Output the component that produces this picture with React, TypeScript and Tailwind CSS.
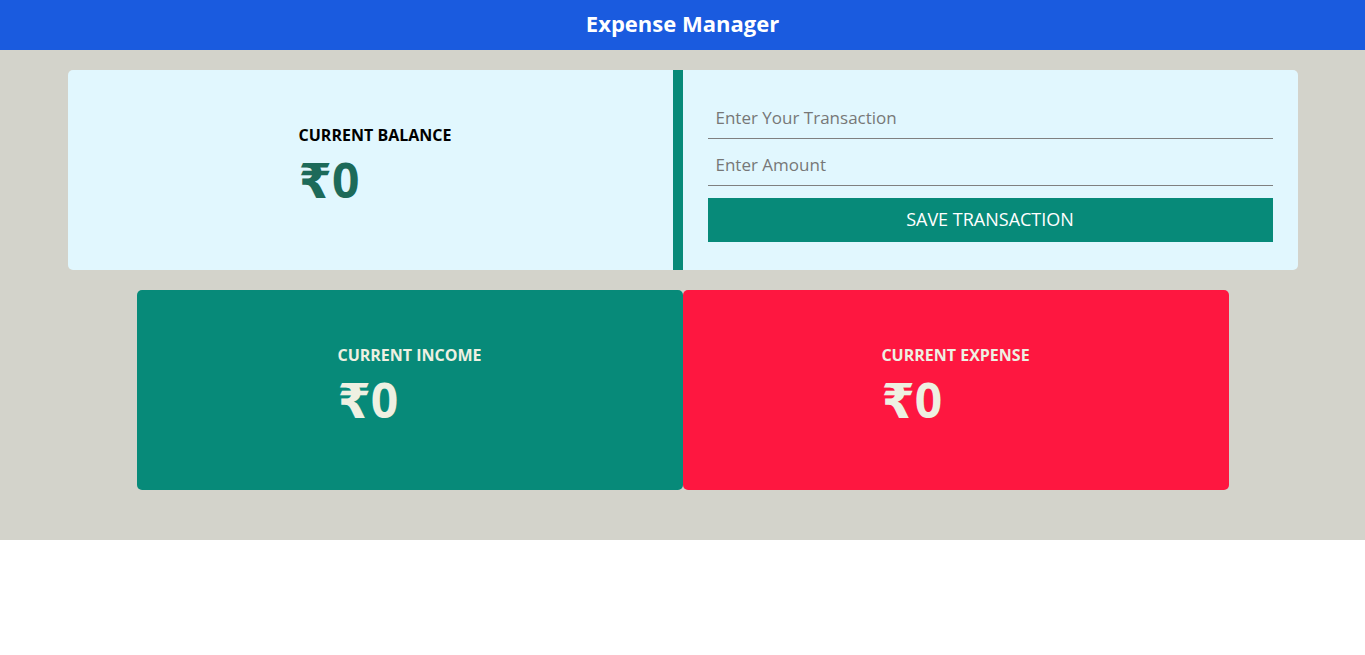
import React from "react";

const font = { fontFamily: "'Open Sans', 'DejaVu Sans', sans-serif" };

const StatCard = ({ label, amount, bg }: { label: string; amount: string; bg: string }) => (
  <div className={`flex-1 h-[200px] rounded-[5px] flex items-center justify-center ${bg}`}>
    <div className="text-[#eef0e2] pb-[5px]">
      <p className="text-[16px] font-bold leading-[20px]">{label}</p>
      <p className="text-[48px] font-bold leading-[60px] mt-[5px]">{amount}</p>
    </div>
  </div>
);

export default function App() {
  return (
    <div style={font} className="w-full">
      <header className="h-[50px] bg-[#1a5bdf] flex items-center justify-center pb-[3px]">
        <h1 className="text-white text-[22px] font-bold">Expense Manager</h1>
      </header>

      <main className="bg-[#d3d3cb] pt-5 pb-[50px]">
        <div className="w-[1230px] mx-auto h-[200px] flex bg-[#e1f7fe] rounded-[5px]">
          <div className="w-[605px] pl-[10px] flex items-center justify-center">
            <div className="pb-[5px]">
              <p className="text-[16px] font-bold leading-[20px] text-black">CURRENT BALANCE</p>
              <p className="text-[48px] font-bold leading-[60px] mt-[5px] text-[#1d6a59]">₹0</p>
            </div>
          </div>
          <div className="flex-1 border-l-[10px] border-[#078a79] px-[25px] pt-[2px] flex flex-col justify-center">
            <input
              placeholder="Enter Your Transaction"
              className="h-[38px] w-full bg-transparent border-b border-[#808080] px-2 pb-[3px] text-[17px] text-black placeholder:text-[#777] outline-none"
            />
            <input
              placeholder="Enter Amount"
              className="h-[38px] mt-[9px] w-full bg-transparent border-b border-[#808080] px-2 pb-[3px] text-[17px] text-black placeholder:text-[#777] outline-none"
            />
            <button className="h-[44px] mt-[12px] w-full bg-[#078a79] text-white text-[18px]">
              SAVE TRANSACTION
            </button>
          </div>
        </div>

        <div className="w-[1092px] mx-auto mt-5 flex">
          <StatCard label="CURRENT INCOME" amount="₹0" bg="bg-[#078a79]" />
          <StatCard label="CURRENT EXPENSE" amount="₹0" bg="bg-[#fe1740]" />
        </div>
      </main>
    </div>
  );
}
